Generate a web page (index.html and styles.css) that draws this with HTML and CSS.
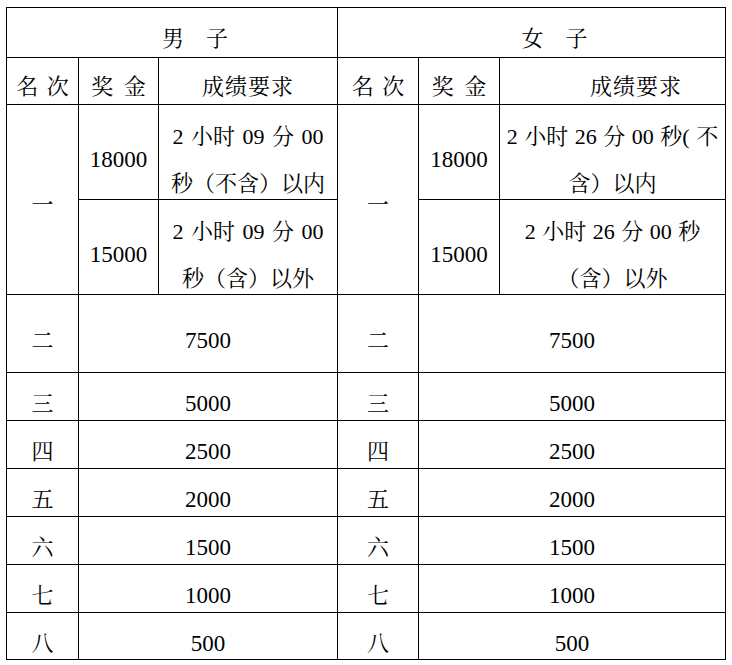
FILE: index.html
```html
<!DOCTYPE html>
<html lang="zh-CN">
<head>
<meta charset="utf-8">
<title>奖金设置</title>
<link rel="stylesheet" href="styles.css">
</head>
<body>
<div class="sheet">
  <div class="grid">
    <div class="c h1 span3 shift">男　子</div>
    <div class="c h1 span3 shift">女　子</div>

    <div class="c h2 ws-rk">名 次</div>
    <div class="c h2 ws-am">奖 金</div>
    <div class="c h2 ls">成绩要求</div>
    <div class="c h2 ws-rk">名 次</div>
    <div class="c h2 ws-am">奖 金</div>
    <div class="c h2 ls shift-r">成绩要求</div>

    <div class="c tall">一</div>
    <div class="c num">18000</div>
    <div class="c req">2 小时 09 分 00<br>秒（不含）以内</div>
    <div class="c tall">一</div>
    <div class="c num">18000</div>
    <div class="c req tight">2 小时 26 分 00 秒(&nbsp;不<br>含）以内</div>

    <div class="c num">15000</div>
    <div class="c req">2 小时 09 分 00<br>秒（含）以外</div>
    <div class="c num">15000</div>
    <div class="c req tight">2 小时 26 分 00 秒<br>（含）以外</div>

    <div class="c">二</div>
    <div class="c span2 num">7500</div>
    <div class="c">二</div>
    <div class="c span2 num">7500</div>

    <div class="c">三</div>
    <div class="c span2 num">5000</div>
    <div class="c">三</div>
    <div class="c span2 num">5000</div>

    <div class="c">四</div>
    <div class="c span2 num">2500</div>
    <div class="c">四</div>
    <div class="c span2 num">2500</div>

    <div class="c">五</div>
    <div class="c span2 num">2000</div>
    <div class="c">五</div>
    <div class="c span2 num">2000</div>

    <div class="c">六</div>
    <div class="c span2 num">1500</div>
    <div class="c">六</div>
    <div class="c span2 num">1500</div>

    <div class="c">七</div>
    <div class="c span2 num">1000</div>
    <div class="c">七</div>
    <div class="c span2 num">1000</div>

    <div class="c">八</div>
    <div class="c span2 num">500</div>
    <div class="c">八</div>
    <div class="c span2 num">500</div>
  </div>
</div>
</body>
</html>
```
FILE: styles.css
```css
html, body {
  margin: 0;
  background: #ffffff;
}

.sheet {
  padding: 7px 0 0 6px;
}

.grid {
  display: grid;
  width: max-content;
  grid-template-columns: 71px 79px 178px 80px 80px 225px;
  grid-template-rows: 49px 46px 94px 94px 77px 47px 47px 47px 47px 47px 46px;
  gap: 1px;
  padding: 1px;
  background: #000000;
  font-family: "Liberation Serif", "Noto Serif CJK SC", "Noto Sans CJK SC", serif;
  font-size: 22px;
  color: #000000;
}

.c {
  background: #ffffff;
  display: flex;
  flex-direction: column;
  justify-content: center;
  align-items: center;
  text-align: center;
  box-sizing: border-box;
  padding-top: 15px;
  line-height: 30px;
  min-height: 0;
  white-space: nowrap;
}

.num {
  font-size: 23px;
}

.h1 {
  padding-top: 13px;
}

.h2 {
  padding-top: 11px;
}

.span3 {
  grid-column: span 3;
}

.span2 {
  grid-column: span 2;
}

.tall {
  grid-row: span 2;
  padding-top: 11px;
}

.shift {
  padding-left: 46px;
}

.shift-r {
  padding-left: 47px;
}

.ws-rk {
  word-spacing: 3px;
}

.ws-am {
  word-spacing: 5px;
}

.ls {
  letter-spacing: 1px;
}

.req {
  line-height: 47px;
  word-spacing: 2px;
}

.tight {
  word-spacing: 1px;
}
```
